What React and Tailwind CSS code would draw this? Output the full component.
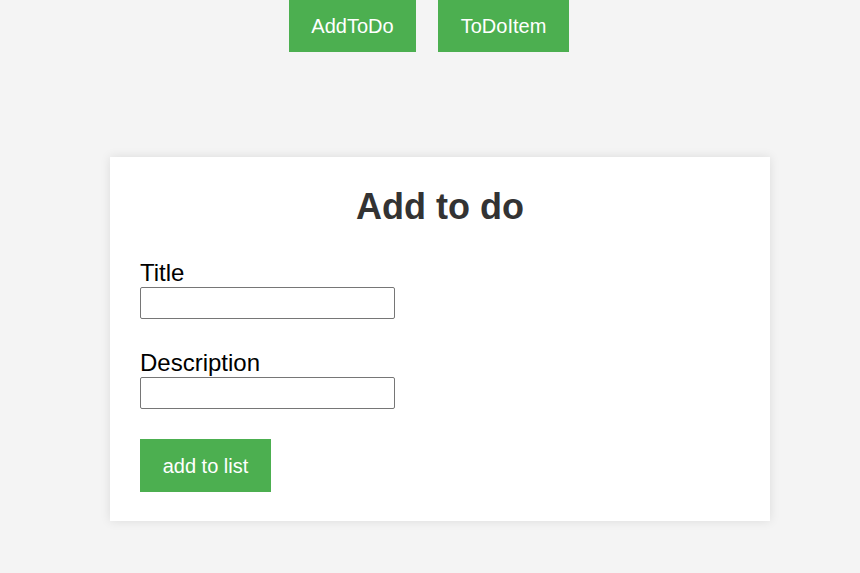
export default function App() {
  return (
    <div
      className="min-h-screen bg-[#f4f4f4] text-black"
      style={{ fontFamily: '"Liberation Sans", Arial, sans-serif' }}
    >
      <nav className="flex justify-center gap-[22px] pr-[2px]">
        <button className="h-[52px] w-[127px] bg-[#4caf50] text-[20px] text-white">
          AddToDo
        </button>
        <button className="h-[52px] w-[131px] bg-[#4caf50] text-[20px] text-white">
          ToDoItem
        </button>
      </nav>

      <div className="mt-[105px] ml-[110px] w-[660px] bg-white px-[30px] pt-[29px] pb-[29px] shadow-[0_0_10px_rgba(0,0,0,0.1)]">
        <h2 className="text-center text-[36px] font-bold leading-[41px] text-[#333]">
          Add to do
        </h2>

        <form className="mt-[32px] flex flex-col items-start">
          <label className="text-[24px] leading-[28px]">Title</label>
          <input
            type="text"
            className="h-[32px] w-[255px] rounded-[2px] border border-[#767676] px-1 text-base"
          />

          <label className="mt-[30px] text-[24px] leading-[28px]">Description</label>
          <input
            type="text"
            className="h-[32px] w-[255px] rounded-[2px] border border-[#767676] px-1 text-base"
          />

          <button
            type="button"
            className="mt-[30px] h-[53px] w-[131px] bg-[#4caf50] text-[20px] text-white"
          >
            add to list
          </button>
        </form>
      </div>
    </div>
  );
}
